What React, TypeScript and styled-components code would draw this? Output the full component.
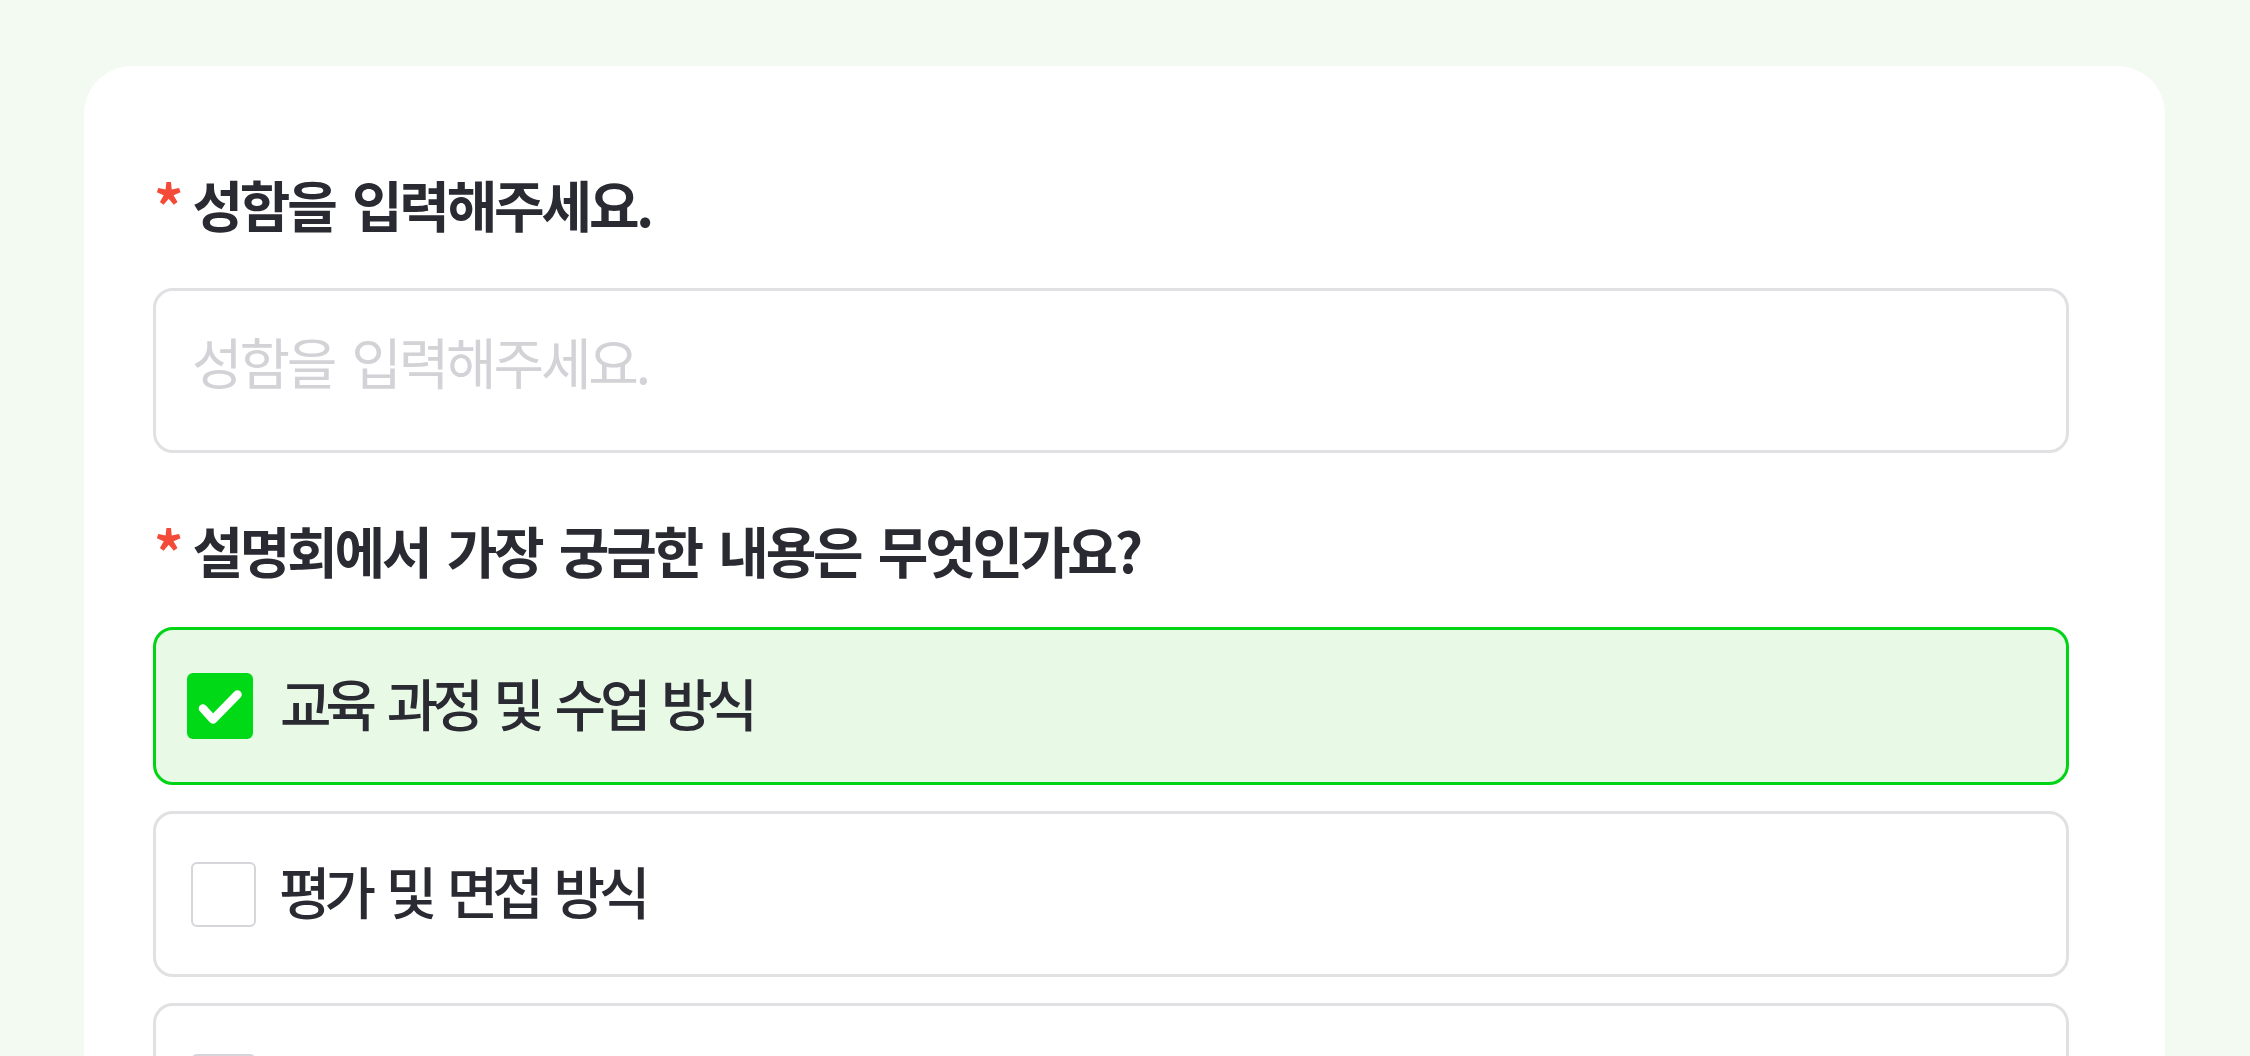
import { useState } from 'react'
import styled, { createGlobalStyle } from 'styled-components'

const GlobalStyle = createGlobalStyle`
  html, body {
    margin: 0;
    padding: 0;
    background: #f3faf2;
  }
  body {
    font-family: "Noto Sans CJK KR", "Noto Sans", sans-serif;
    color: #2a2a32;
  }
  * { box-sizing: border-box; }
`

const Page = styled.div`
  min-height: 100vh;
  padding: 66px 85px 0 84px;
`

const Card = styled.form`
  background: #fff;
  border-radius: 48px 48px 0 0;
  padding: 107px 96px 80px 69px;
  min-height: 1200px;
`

const Field = styled.section`
  display: flex;
  flex-direction: column;
  & + & { margin-top: 66px; }
`

const Question = styled.h2`
  margin: 0 0 55px;
  height: 60px;
  display: flex;
  align-items: center;
  font-size: 55px;
  font-weight: 700;
  letter-spacing: -3.2px;
  word-spacing: 8px;
  color: #2a2a32;
`

const Required = styled.span`
  color: #f44a38;
  font-size: 58px;
  font-weight: 700;
  letter-spacing: 0;
  margin: 0 9px 0 1px;
  position: relative;
  top: 1px;
`

const TextInput = styled.input`
  width: 100%;
  height: 165px;
  border: 3.5px solid #e1e1e4;
  border-radius: 20px;
  padding: 0 36px 22px;
  font-family: inherit;
  font-size: 55px;
  font-weight: 400;
  letter-spacing: -3.2px;
  word-spacing: 8px;
  color: #2a2a32;
  background: #fff;
  outline: none;
  &::placeholder { color: #d2d2d7; }
`

const Options = styled.div`
  display: flex;
  flex-direction: column;
  gap: 26px;
  margin-top: -7px;
`

const Option = styled.label<{ checked: boolean }>`
  display: flex;
  align-items: center;
  height: ${p => (p.checked ? '158px' : '166px')};
  padding-left: ${p => (p.checked ? '31px' : '35px')};
  border: ${p => (p.checked ? '3px solid #00d414' : '3.5px solid #e1e1e4')};
  background: ${p => (p.checked ? '#e8f9e6' : '#fff')};
  border-radius: 20px;
  cursor: pointer;
`

const HiddenInput = styled.input`
  position: absolute;
  opacity: 0;
  pointer-events: none;
`

const Box = styled.span<{ checked: boolean }>`
  flex: none;
  width: ${p => (p.checked ? '66px' : '65px')};
  height: ${p => (p.checked ? '66px' : '65px')};
  margin-right: ${p => (p.checked ? '27px' : '23px')};
  border-radius: 6px;
  background: ${p => (p.checked ? '#00d916' : '#fff')};
  border: ${p => (p.checked ? 'none' : '2.5px solid #d5d5da')};
  display: flex;
  align-items: center;
  justify-content: center;
`

const OptionText = styled.span`
  font-size: 56px;
  font-weight: 500;
  letter-spacing: -6px;
  word-spacing: 9px;
  color: #2a2a32;
  position: relative;
  top: -5px;
`

const choices = [
  '교육 과정 및 수업 방식',
  '평가 및 면접 방식',
  '수강료 및 지원 혜택',
  '수료 후 취업 연계',
]

function Check() {
  return (
    <svg width="66" height="66" viewBox="0 0 66 66" fill="none">
      <path d="M16 35.5 L26 46.5 L50.5 21.5" stroke="#fff" strokeWidth="8.5" strokeLinecap="round" strokeLinejoin="round" />
    </svg>
  )
}

export default function App() {
  const [name, setName] = useState('')
  const [picked, setPicked] = useState<string[]>([choices[0]])

  function toggle(c: string) {
    setPicked(prev => (prev.includes(c) ? prev.filter(x => x !== c) : [...prev, c]))
  }

  return (
    <>
      <GlobalStyle />
      <Page>
        <Card onSubmit={e => e.preventDefault()}>
          <Field>
            <Question><Required>*</Required>성함을 입력해주세요.</Question>
            <TextInput
              value={name}
              onChange={e => setName(e.target.value)}
              placeholder="성함을 입력해주세요."
            />
          </Field>
          <Field>
            <Question><Required>*</Required>설명회에서 가장 궁금한 내용은 무엇인가요?</Question>
            <Options>
              {choices.map(c => {
                const on = picked.includes(c)
                return (
                  <Option key={c} checked={on}>
                    <HiddenInput type="checkbox" checked={on} onChange={() => toggle(c)} />
                    <Box checked={on}>{on && <Check />}</Box>
                    <OptionText>{c}</OptionText>
                  </Option>
                )
              })}
            </Options>
          </Field>
        </Card>
      </Page>
    </>
  )
}
